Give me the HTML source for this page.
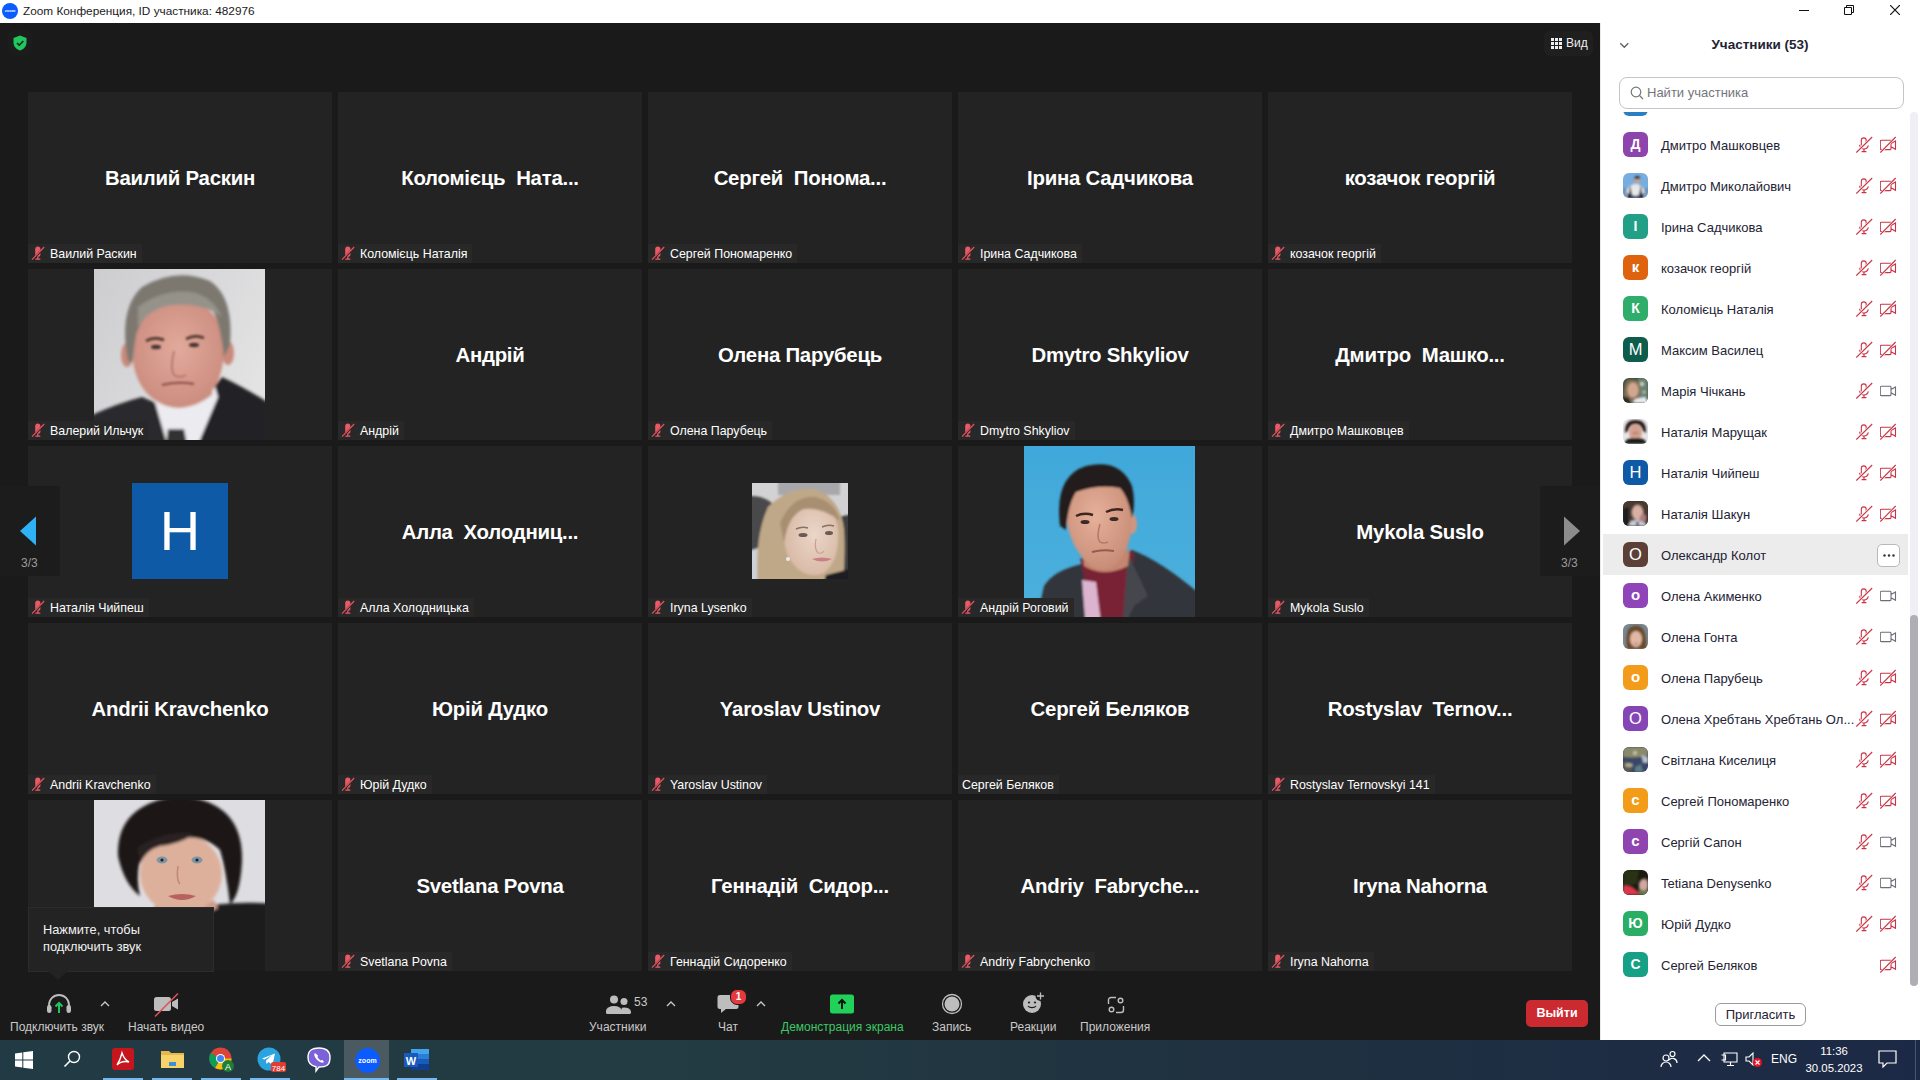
<!DOCTYPE html><html><head><meta charset="utf-8"><style>
*{margin:0;padding:0;box-sizing:border-box}
html,body{width:1920px;height:1080px;overflow:hidden;background:#1a1a1a;font-family:"Liberation Sans", sans-serif}
.abs{position:absolute}
#title{left:0;top:0;width:1920px;height:23px;background:#fff}
#main{left:0;top:23px;width:1600px;height:1017px;background:#1a1a1a}
.tile{position:absolute;width:304px;height:171px;background:#232323;overflow:hidden}
.big{position:absolute;left:0;width:304px;top:75px;text-align:center;color:#fff;font-weight:bold;font-size:20.4px;letter-spacing:-0.25px;line-height:22px;white-space:pre}
.tag{position:absolute;left:0;bottom:0;height:19px;background:#282828;color:#fff;font-size:12.4px;line-height:21px;padding-left:22px;padding-right:5px;white-space:pre}
.tag.nomic{padding-left:4px}
.tag svg{position:absolute;left:3px;top:2px}
#panel{left:1600px;top:23px;width:320px;height:1017px;background:#fff;border-left:1px solid #e8e8e8}
.row{position:absolute;left:1603px;width:305px;height:41px}
.av{position:absolute;left:20px;top:8px;width:25px;height:25px;border-radius:6px;color:#fff;font-size:14px;line-height:25px;text-align:center;overflow:hidden}
.pname{position:absolute;left:58px;top:1px;line-height:41px;font-size:13px;color:#232333;white-space:nowrap}
.ic{position:absolute;top:12px;width:17px;height:17px}
.tb{position:absolute;color:#c9c9c9;font-size:12px;white-space:nowrap}
#taskbar{left:0;top:1040px;width:1920px;height:40px;background:linear-gradient(90deg,#213a44 0%,#233b42 35%,#1f3140 65%,#1c2946 100%)}
</style></head><body><div id="title" class="abs">
<div class="abs" style="left:2px;top:3px;width:16px;height:16px;border-radius:50%;background:#0b5cff;color:#fff;font-size:4px;line-height:16px;text-align:center;font-weight:bold">zoom</div>
<div class="abs" style="left:23px;top:3px;font-size:11.8px;line-height:16px;color:#1a1a1a;white-space:nowrap">Zoom Конференция, ID участника: 482976</div>
<div class="abs" style="left:1799px;top:10px;width:10px;height:1px;background:#111"></div>
<svg class="abs" style="left:1844px;top:5px" width="10" height="10" viewBox="0 0 10 10"><path d="M0.5 2.5h7v7h-7z M2.5 2.5V0.5h7v7h-2" fill="none" stroke="#111" stroke-width="1"/></svg>
<svg class="abs" style="left:1890px;top:5px" width="10" height="10" viewBox="0 0 10 10"><path d="M0 0L10 10M10 0L0 10" stroke="#111" stroke-width="1.2"/></svg>
</div>
<div id="main" class="abs">
<div class="abs" style="left:8px;top:7px;width:24px;height:25px;border-radius:5px;background:#1c1c1c"></div>
<svg class="abs" style="left:13px;top:12px" width="14" height="16" viewBox="0 0 14 16"><path d="M7 0.5L13.5 3v4.5c0 4-2.8 6.8-6.5 8-3.7-1.2-6.5-4-6.5-8V3z" fill="#23c55e"/><path d="M4 8l2.2 2.2L10.3 6" fill="none" stroke="#0d2a16" stroke-width="1.6"/></svg>
<div class="abs" style="left:1544px;top:8px;width:49px;height:25px;border-radius:6px;background:#1f1f1f"></div>
<svg class="abs" style="left:1551px;top:15px" width="11" height="11" viewBox="0 0 11 11"><rect x="0" y="0" width="3" height="3" fill="#eee"/><rect x="0" y="4" width="3" height="3" fill="#eee"/><rect x="0" y="8" width="3" height="3" fill="#eee"/><rect x="4" y="0" width="3" height="3" fill="#eee"/><rect x="4" y="4" width="3" height="3" fill="#eee"/><rect x="4" y="8" width="3" height="3" fill="#eee"/><rect x="8" y="0" width="3" height="3" fill="#eee"/><rect x="8" y="4" width="3" height="3" fill="#eee"/><rect x="8" y="8" width="3" height="3" fill="#eee"/></svg>
<div class="abs" style="left:1566px;top:12px;color:#eee;font-size:12px;line-height:16px">Вид</div>
</div>
<div class="tile" style="left:28px;top:92px"><div class="big">Ваилий Раскин</div><div class="tag"><svg width="15" height="15" viewBox="0 0 15 15"><path d="M4.2 3.2a2.6 2.6 0 0 1 5.2 0v5a2.6 2.6 0 0 1-5.2 0z" fill="#ea5a66"/><path d="M6.8 11v1.8M4.3 13.2h5" stroke="#ea5a66" stroke-width="1.3"/><path d="M1.2 14L13.4 1.4" stroke="#282828" stroke-width="2.2"/><path d="M1 13.6L13.2 1" stroke="#e8525f" stroke-width="1.2"/></svg>Ваилий Раскин</div></div>
<div class="tile" style="left:338px;top:92px"><div class="big">Коломієць  Ната...</div><div class="tag"><svg width="15" height="15" viewBox="0 0 15 15"><path d="M4.2 3.2a2.6 2.6 0 0 1 5.2 0v5a2.6 2.6 0 0 1-5.2 0z" fill="#ea5a66"/><path d="M6.8 11v1.8M4.3 13.2h5" stroke="#ea5a66" stroke-width="1.3"/><path d="M1.2 14L13.4 1.4" stroke="#282828" stroke-width="2.2"/><path d="M1 13.6L13.2 1" stroke="#e8525f" stroke-width="1.2"/></svg>Коломієць Наталія</div></div>
<div class="tile" style="left:648px;top:92px"><div class="big">Сергей  Понома...</div><div class="tag"><svg width="15" height="15" viewBox="0 0 15 15"><path d="M4.2 3.2a2.6 2.6 0 0 1 5.2 0v5a2.6 2.6 0 0 1-5.2 0z" fill="#ea5a66"/><path d="M6.8 11v1.8M4.3 13.2h5" stroke="#ea5a66" stroke-width="1.3"/><path d="M1.2 14L13.4 1.4" stroke="#282828" stroke-width="2.2"/><path d="M1 13.6L13.2 1" stroke="#e8525f" stroke-width="1.2"/></svg>Сергей Пономаренко</div></div>
<div class="tile" style="left:958px;top:92px"><div class="big">Ірина Садчикова</div><div class="tag"><svg width="15" height="15" viewBox="0 0 15 15"><path d="M4.2 3.2a2.6 2.6 0 0 1 5.2 0v5a2.6 2.6 0 0 1-5.2 0z" fill="#ea5a66"/><path d="M6.8 11v1.8M4.3 13.2h5" stroke="#ea5a66" stroke-width="1.3"/><path d="M1.2 14L13.4 1.4" stroke="#282828" stroke-width="2.2"/><path d="M1 13.6L13.2 1" stroke="#e8525f" stroke-width="1.2"/></svg>Ірина Садчикова</div></div>
<div class="tile" style="left:1268px;top:92px"><div class="big">козачок георгій</div><div class="tag"><svg width="15" height="15" viewBox="0 0 15 15"><path d="M4.2 3.2a2.6 2.6 0 0 1 5.2 0v5a2.6 2.6 0 0 1-5.2 0z" fill="#ea5a66"/><path d="M6.8 11v1.8M4.3 13.2h5" stroke="#ea5a66" stroke-width="1.3"/><path d="M1.2 14L13.4 1.4" stroke="#282828" stroke-width="2.2"/><path d="M1 13.6L13.2 1" stroke="#e8525f" stroke-width="1.2"/></svg>козачок георгій</div></div>
<div class="tile" style="left:28px;top:269px"><svg class="abs" style="left:66px;top:0" width="171" height="171" viewBox="0 0 171 171"><defs><linearGradient id="g1" x1="0" y1="0" x2="1" y2="0.6"><stop offset="0" stop-color="#cdcdd0"/><stop offset="0.6" stop-color="#dadadc"/><stop offset="1" stop-color="#e4e3e3"/></linearGradient><radialGradient id="f1" cx="0.5" cy="0.45" r="0.6"><stop offset="0" stop-color="#e2aa9c"/><stop offset="1" stop-color="#c98a7c"/></radialGradient><filter id="b1" x="-20%" y="-20%" width="140%" height="140%"><feGaussianBlur stdDeviation="1.5"/></filter><filter id="b1s"><feGaussianBlur stdDeviation="0.8"/></filter></defs><rect width="171" height="171" fill="url(#g1)"/>
<g filter="url(#b1)">
<path d="M-15 152 Q20 135 48 128 L62 134 L86 185 L-15 185z" fill="#2b2b2d"/>
<path d="M185 140 Q150 118 128 108 L112 128 L92 185 L185 185z" fill="#242426"/>
<path d="M60 130 Q88 150 120 114 L124 128 L100 185 L76 185z" fill="#ecebef"/>
<path d="M74 160 L90 160 L95 185 L71 185z" fill="#333"/>
<path d="M62 112 Q88 142 120 108 L118 126 Q90 148 64 130z" fill="#c99484"/>
<ellipse cx="33" cy="86" rx="6" ry="12" fill="#c8897a"/><ellipse cx="134" cy="84" rx="6" ry="12" fill="#c8897a"/>
<path d="M38 78 Q38 34 84 32 Q128 32 130 78 Q130 116 108 132 Q84 146 62 132 Q38 116 38 78z" fill="url(#f1)"/>
<path d="M34 92 Q24 40 48 18 Q82 -2 116 12 Q140 28 136 76 L130 88 Q126 52 118 40 Q98 30 72 34 Q50 40 42 66 L38 94z" fill="#7b7870"/>
<path d="M44 38 Q72 18 102 24 Q120 30 128 48 Q110 34 80 36 Q56 38 44 58z" fill="#95928a"/>
</g>
<g filter="url(#b1s)">
<path d="M52 72 Q60 67 70 71" stroke="#5b4036" stroke-width="3" fill="none"/><path d="M92 70 Q101 65 110 69" stroke="#5b4036" stroke-width="3" fill="none"/>
<ellipse cx="62" cy="78" rx="5" ry="2.2" fill="#4a3630"/><ellipse cx="100" cy="76" rx="5" ry="2.2" fill="#4a3630"/>
<path d="M80 82 Q76 100 80 106 Q86 110 92 106" stroke="#b77c6e" stroke-width="2" fill="none"/>
<path d="M68 116 Q84 112 100 115" stroke="#9a5a52" stroke-width="2.5" fill="none"/>
</g>
</svg><div class="tag"><svg width="15" height="15" viewBox="0 0 15 15"><path d="M4.2 3.2a2.6 2.6 0 0 1 5.2 0v5a2.6 2.6 0 0 1-5.2 0z" fill="#ea5a66"/><path d="M6.8 11v1.8M4.3 13.2h5" stroke="#ea5a66" stroke-width="1.3"/><path d="M1.2 14L13.4 1.4" stroke="#282828" stroke-width="2.2"/><path d="M1 13.6L13.2 1" stroke="#e8525f" stroke-width="1.2"/></svg>Валерий Ильчук</div></div>
<div class="tile" style="left:338px;top:269px"><div class="big">Андрій</div><div class="tag"><svg width="15" height="15" viewBox="0 0 15 15"><path d="M4.2 3.2a2.6 2.6 0 0 1 5.2 0v5a2.6 2.6 0 0 1-5.2 0z" fill="#ea5a66"/><path d="M6.8 11v1.8M4.3 13.2h5" stroke="#ea5a66" stroke-width="1.3"/><path d="M1.2 14L13.4 1.4" stroke="#282828" stroke-width="2.2"/><path d="M1 13.6L13.2 1" stroke="#e8525f" stroke-width="1.2"/></svg>Андрій</div></div>
<div class="tile" style="left:648px;top:269px"><div class="big">Олена Парубець</div><div class="tag"><svg width="15" height="15" viewBox="0 0 15 15"><path d="M4.2 3.2a2.6 2.6 0 0 1 5.2 0v5a2.6 2.6 0 0 1-5.2 0z" fill="#ea5a66"/><path d="M6.8 11v1.8M4.3 13.2h5" stroke="#ea5a66" stroke-width="1.3"/><path d="M1.2 14L13.4 1.4" stroke="#282828" stroke-width="2.2"/><path d="M1 13.6L13.2 1" stroke="#e8525f" stroke-width="1.2"/></svg>Олена Парубець</div></div>
<div class="tile" style="left:958px;top:269px"><div class="big">Dmytro Shkyliov</div><div class="tag"><svg width="15" height="15" viewBox="0 0 15 15"><path d="M4.2 3.2a2.6 2.6 0 0 1 5.2 0v5a2.6 2.6 0 0 1-5.2 0z" fill="#ea5a66"/><path d="M6.8 11v1.8M4.3 13.2h5" stroke="#ea5a66" stroke-width="1.3"/><path d="M1.2 14L13.4 1.4" stroke="#282828" stroke-width="2.2"/><path d="M1 13.6L13.2 1" stroke="#e8525f" stroke-width="1.2"/></svg>Dmytro Shkyliov</div></div>
<div class="tile" style="left:1268px;top:269px"><div class="big">Дмитро  Машко...</div><div class="tag"><svg width="15" height="15" viewBox="0 0 15 15"><path d="M4.2 3.2a2.6 2.6 0 0 1 5.2 0v5a2.6 2.6 0 0 1-5.2 0z" fill="#ea5a66"/><path d="M6.8 11v1.8M4.3 13.2h5" stroke="#ea5a66" stroke-width="1.3"/><path d="M1.2 14L13.4 1.4" stroke="#282828" stroke-width="2.2"/><path d="M1 13.6L13.2 1" stroke="#e8525f" stroke-width="1.2"/></svg>Дмитро Машковцев</div></div>
<div class="tile" style="left:28px;top:446px"><div class="abs" style="left:104px;top:37px;width:96px;height:96px;background:#0e5aa7;color:#fff;font-size:56px;line-height:96px;text-align:center">H</div><div class="tag"><svg width="15" height="15" viewBox="0 0 15 15"><path d="M4.2 3.2a2.6 2.6 0 0 1 5.2 0v5a2.6 2.6 0 0 1-5.2 0z" fill="#ea5a66"/><path d="M6.8 11v1.8M4.3 13.2h5" stroke="#ea5a66" stroke-width="1.3"/><path d="M1.2 14L13.4 1.4" stroke="#282828" stroke-width="2.2"/><path d="M1 13.6L13.2 1" stroke="#e8525f" stroke-width="1.2"/></svg>Наталія Чийпеш</div></div>
<div class="tile" style="left:338px;top:446px"><div class="big">Алла  Холодниц...</div><div class="tag"><svg width="15" height="15" viewBox="0 0 15 15"><path d="M4.2 3.2a2.6 2.6 0 0 1 5.2 0v5a2.6 2.6 0 0 1-5.2 0z" fill="#ea5a66"/><path d="M6.8 11v1.8M4.3 13.2h5" stroke="#ea5a66" stroke-width="1.3"/><path d="M1.2 14L13.4 1.4" stroke="#282828" stroke-width="2.2"/><path d="M1 13.6L13.2 1" stroke="#e8525f" stroke-width="1.2"/></svg>Алла Холодницька</div></div>
<div class="tile" style="left:648px;top:446px"><svg class="abs" style="left:104px;top:37px" width="96" height="96" viewBox="0 0 96 96"><defs><filter id="b2"><feGaussianBlur stdDeviation="1.3"/></filter><filter id="b2s"><feGaussianBlur stdDeviation="0.6"/></filter><radialGradient id="f2" cx="0.55" cy="0.45" r="0.6"><stop offset="0" stop-color="#ead6c8"/><stop offset="1" stop-color="#d8b8a4"/></radialGradient></defs><rect width="96" height="96" fill="#d2d2d4"/>
<g filter="url(#b2)">
<rect x="26" y="-10" width="62" height="22" fill="#a8a8aa"/>
<path d="M-10 14 Q10 10 22 22 L22 64 L-10 70z" fill="#4a4a4c"/>
<path d="M86 34 L106 30 L106 106 L84 106z" fill="#3e3e40"/>
<path d="M-10 70 L16 62 L14 106 L-10 106z" fill="#cdd2d6"/>
<path d="M6 106 Q2 54 16 24 Q36 4 62 6 Q88 14 92 46 Q94 76 90 106z" fill="#bfa888"/>
<path d="M32 52 Q30 22 56 18 Q82 18 86 46 Q88 78 72 90 Q58 96 46 86 Q32 74 32 52z" fill="url(#f2)"/>
<path d="M28 40 Q40 12 64 14 Q84 20 88 38 Q70 24 52 26 Q36 32 32 60z" fill="#a88f72"/>
<path d="M74 92 L106 84 L106 106 L70 106z" fill="#1e1e20"/>
</g>
<g filter="url(#b2s)">
<path d="M44 46 Q50 43 56 45" stroke="#8a7060" stroke-width="1.4" fill="none"/><path d="M70 44 Q76 41 82 43" stroke="#8a7060" stroke-width="1.4" fill="none"/>
<ellipse cx="51" cy="52" rx="4.5" ry="2" fill="#6a5a52"/><ellipse cx="77" cy="50" rx="4" ry="2" fill="#6a5a52"/>
<path d="M64 56 Q62 66 66 70 Q70 71 72 68" stroke="#c8a090" stroke-width="1.2" fill="none"/>
<path d="M60 76 Q70 73 80 76 Q70 81 60 76z" fill="#c97f86"/>
<circle cx="36" cy="76" r="2" fill="#eaeaea"/>
</g>
</svg><div class="tag"><svg width="15" height="15" viewBox="0 0 15 15"><path d="M4.2 3.2a2.6 2.6 0 0 1 5.2 0v5a2.6 2.6 0 0 1-5.2 0z" fill="#ea5a66"/><path d="M6.8 11v1.8M4.3 13.2h5" stroke="#ea5a66" stroke-width="1.3"/><path d="M1.2 14L13.4 1.4" stroke="#282828" stroke-width="2.2"/><path d="M1 13.6L13.2 1" stroke="#e8525f" stroke-width="1.2"/></svg>Iryna Lysenko</div></div>
<div class="tile" style="left:958px;top:446px"><svg class="abs" style="left:66px;top:0" width="171" height="171" viewBox="0 0 171 171"><defs><linearGradient id="g3" x1="0" y1="0" x2="0" y2="1"><stop offset="0" stop-color="#40a8da"/><stop offset="1" stop-color="#4cb0dc"/></linearGradient><radialGradient id="f3" cx="0.45" cy="0.4" r="0.6"><stop offset="0" stop-color="#e6b09a"/><stop offset="1" stop-color="#c98e78"/></radialGradient><filter id="b3"><feGaussianBlur stdDeviation="1.3"/></filter><filter id="b3s"><feGaussianBlur stdDeviation="0.7"/></filter></defs><rect width="171" height="171" fill="url(#g3)"/>
<g filter="url(#b3)">
<path d="M10 185 L20 140 Q30 124 58 118 L108 104 Q140 116 185 156 L185 185z" fill="#33353b"/>
<path d="M56 112 L72 185 L104 185 L110 106 Q84 120 56 112z" fill="#7a2034"/>
<path d="M58 134 L72 136 L78 185 L62 185z" fill="#dcb4cf"/>
<path d="M104 108 L124 150 L110 160 L98 185z" fill="#44474e"/>
<path d="M58 104 Q78 128 106 102 L104 120 Q80 132 60 120z" fill="#c58670"/>
<ellipse cx="108" cy="78" rx="5" ry="10" fill="#d29680"/>
<path d="M42 70 Q40 36 72 34 Q106 34 108 70 Q108 104 92 118 Q80 128 68 120 Q46 104 42 70z" fill="url(#f3)"/>
<path d="M36 80 Q30 30 62 20 Q96 12 108 40 Q112 56 108 72 Q104 50 96 42 Q74 38 52 46 Q44 58 42 84z" fill="#221e1c"/>
</g>
<g filter="url(#b3s)">
<path d="M52 70 Q60 66 69 69" stroke="#3a2820" stroke-width="2.5" fill="none"/><path d="M82 66 Q90 62 99 64" stroke="#3a2820" stroke-width="2.5" fill="none"/>
<ellipse cx="61" cy="76" rx="4.5" ry="2" fill="#3a2c28"/><ellipse cx="90" cy="73" rx="4.5" ry="2" fill="#3a2c28"/>
<path d="M76 78 Q72 92 76 96 Q80 98 84 96" stroke="#b87a66" stroke-width="1.6" fill="none"/>
<path d="M68 106 Q78 103 90 105" stroke="#9a5a50" stroke-width="2" fill="none"/>
</g>
</svg><div class="tag"><svg width="15" height="15" viewBox="0 0 15 15"><path d="M4.2 3.2a2.6 2.6 0 0 1 5.2 0v5a2.6 2.6 0 0 1-5.2 0z" fill="#ea5a66"/><path d="M6.8 11v1.8M4.3 13.2h5" stroke="#ea5a66" stroke-width="1.3"/><path d="M1.2 14L13.4 1.4" stroke="#282828" stroke-width="2.2"/><path d="M1 13.6L13.2 1" stroke="#e8525f" stroke-width="1.2"/></svg>Андрій Роговий</div></div>
<div class="tile" style="left:1268px;top:446px"><div class="big">Mykola Suslo</div><div class="tag"><svg width="15" height="15" viewBox="0 0 15 15"><path d="M4.2 3.2a2.6 2.6 0 0 1 5.2 0v5a2.6 2.6 0 0 1-5.2 0z" fill="#ea5a66"/><path d="M6.8 11v1.8M4.3 13.2h5" stroke="#ea5a66" stroke-width="1.3"/><path d="M1.2 14L13.4 1.4" stroke="#282828" stroke-width="2.2"/><path d="M1 13.6L13.2 1" stroke="#e8525f" stroke-width="1.2"/></svg>Mykola Suslo</div></div>
<div class="tile" style="left:28px;top:623px"><div class="big">Andrii Kravchenko</div><div class="tag"><svg width="15" height="15" viewBox="0 0 15 15"><path d="M4.2 3.2a2.6 2.6 0 0 1 5.2 0v5a2.6 2.6 0 0 1-5.2 0z" fill="#ea5a66"/><path d="M6.8 11v1.8M4.3 13.2h5" stroke="#ea5a66" stroke-width="1.3"/><path d="M1.2 14L13.4 1.4" stroke="#282828" stroke-width="2.2"/><path d="M1 13.6L13.2 1" stroke="#e8525f" stroke-width="1.2"/></svg>Andrii Kravchenko</div></div>
<div class="tile" style="left:338px;top:623px"><div class="big">Юрій Дудко</div><div class="tag"><svg width="15" height="15" viewBox="0 0 15 15"><path d="M4.2 3.2a2.6 2.6 0 0 1 5.2 0v5a2.6 2.6 0 0 1-5.2 0z" fill="#ea5a66"/><path d="M6.8 11v1.8M4.3 13.2h5" stroke="#ea5a66" stroke-width="1.3"/><path d="M1.2 14L13.4 1.4" stroke="#282828" stroke-width="2.2"/><path d="M1 13.6L13.2 1" stroke="#e8525f" stroke-width="1.2"/></svg>Юрій Дудко</div></div>
<div class="tile" style="left:648px;top:623px"><div class="big">Yaroslav Ustinov</div><div class="tag"><svg width="15" height="15" viewBox="0 0 15 15"><path d="M4.2 3.2a2.6 2.6 0 0 1 5.2 0v5a2.6 2.6 0 0 1-5.2 0z" fill="#ea5a66"/><path d="M6.8 11v1.8M4.3 13.2h5" stroke="#ea5a66" stroke-width="1.3"/><path d="M1.2 14L13.4 1.4" stroke="#282828" stroke-width="2.2"/><path d="M1 13.6L13.2 1" stroke="#e8525f" stroke-width="1.2"/></svg>Yaroslav Ustinov</div></div>
<div class="tile" style="left:958px;top:623px"><div class="big">Сергей Беляков</div><div class="tag nomic">Сергей Беляков</div></div>
<div class="tile" style="left:1268px;top:623px"><div class="big">Rostyslav  Ternov...</div><div class="tag"><svg width="15" height="15" viewBox="0 0 15 15"><path d="M4.2 3.2a2.6 2.6 0 0 1 5.2 0v5a2.6 2.6 0 0 1-5.2 0z" fill="#ea5a66"/><path d="M6.8 11v1.8M4.3 13.2h5" stroke="#ea5a66" stroke-width="1.3"/><path d="M1.2 14L13.4 1.4" stroke="#282828" stroke-width="2.2"/><path d="M1 13.6L13.2 1" stroke="#e8525f" stroke-width="1.2"/></svg>Rostyslav Ternovskyi 141</div></div>
<div class="tile" style="left:28px;top:800px"><svg class="abs" style="left:66px;top:0" width="171" height="171" viewBox="0 0 171 171"><defs><filter id="b4"><feGaussianBlur stdDeviation="1.4"/></filter><filter id="b4s"><feGaussianBlur stdDeviation="0.7"/></filter></defs><rect width="171" height="171" fill="#dedee2"/>
<g filter="url(#b4)">
<path d="M44 185 Q52 124 96 110 Q130 100 185 104 L185 185z" fill="#1c1b1f"/>
<path d="M58 112 Q88 128 124 108 L120 100 Q90 118 62 104z" fill="#cf9c8a"/>
<ellipse cx="87" cy="74" rx="41" ry="40" fill="#ddb09c"/>
<path d="M24 56 Q22 4 84 -4 Q150 0 148 62 Q146 96 136 104 Q132 70 126 50 Q110 34 82 38 Q56 40 46 60 Q42 80 46 96 Q30 84 24 56z" fill="#1d1818"/>
<path d="M44 48 Q70 30 100 34 Q86 44 66 46 Q52 50 46 64z" fill="#2a2222"/>
<rect x="96" y="128" width="8" height="60" rx="4" fill="#6a5a78"/>
</g>
<g filter="url(#b4s)">
<ellipse cx="68" cy="60" rx="5.5" ry="3.5" fill="#7f95a4"/><ellipse cx="103" cy="60" rx="5.5" ry="3.5" fill="#7f95a4"/>
<circle cx="68" cy="60" r="1.6" fill="#222"/><circle cx="103" cy="60" r="1.6" fill="#222"/>
<path d="M84 66 Q82 80 86 84" stroke="#c08a78" stroke-width="1.6" fill="none"/>
<path d="M74 96 Q88 92 102 96 Q88 104 74 96z" fill="#b8625e"/>
</g>
</svg></div>
<div class="tile" style="left:338px;top:800px"><div class="big">Svetlana Povna</div><div class="tag"><svg width="15" height="15" viewBox="0 0 15 15"><path d="M4.2 3.2a2.6 2.6 0 0 1 5.2 0v5a2.6 2.6 0 0 1-5.2 0z" fill="#ea5a66"/><path d="M6.8 11v1.8M4.3 13.2h5" stroke="#ea5a66" stroke-width="1.3"/><path d="M1.2 14L13.4 1.4" stroke="#282828" stroke-width="2.2"/><path d="M1 13.6L13.2 1" stroke="#e8525f" stroke-width="1.2"/></svg>Svetlana Povna</div></div>
<div class="tile" style="left:648px;top:800px"><div class="big">Геннадій  Сидор...</div><div class="tag"><svg width="15" height="15" viewBox="0 0 15 15"><path d="M4.2 3.2a2.6 2.6 0 0 1 5.2 0v5a2.6 2.6 0 0 1-5.2 0z" fill="#ea5a66"/><path d="M6.8 11v1.8M4.3 13.2h5" stroke="#ea5a66" stroke-width="1.3"/><path d="M1.2 14L13.4 1.4" stroke="#282828" stroke-width="2.2"/><path d="M1 13.6L13.2 1" stroke="#e8525f" stroke-width="1.2"/></svg>Геннадій Сидоренко</div></div>
<div class="tile" style="left:958px;top:800px"><div class="big">Andriy  Fabryche...</div><div class="tag"><svg width="15" height="15" viewBox="0 0 15 15"><path d="M4.2 3.2a2.6 2.6 0 0 1 5.2 0v5a2.6 2.6 0 0 1-5.2 0z" fill="#ea5a66"/><path d="M6.8 11v1.8M4.3 13.2h5" stroke="#ea5a66" stroke-width="1.3"/><path d="M1.2 14L13.4 1.4" stroke="#282828" stroke-width="2.2"/><path d="M1 13.6L13.2 1" stroke="#e8525f" stroke-width="1.2"/></svg>Andriy Fabrychenko</div></div>
<div class="tile" style="left:1268px;top:800px"><div class="big">Iryna Nahorna</div><div class="tag"><svg width="15" height="15" viewBox="0 0 15 15"><path d="M4.2 3.2a2.6 2.6 0 0 1 5.2 0v5a2.6 2.6 0 0 1-5.2 0z" fill="#ea5a66"/><path d="M6.8 11v1.8M4.3 13.2h5" stroke="#ea5a66" stroke-width="1.3"/><path d="M1.2 14L13.4 1.4" stroke="#282828" stroke-width="2.2"/><path d="M1 13.6L13.2 1" stroke="#e8525f" stroke-width="1.2"/></svg>Iryna Nahorna</div></div>
<div class="abs" style="left:0;top:486px;width:60px;height:90px;background:#1c1c1c"></div>
<svg class="abs" style="left:19px;top:516px" width="18" height="30" viewBox="0 0 18 30"><path d="M17 0.5V29.5L1 15z" fill="#2fb2f5"/></svg>
<div class="abs" style="left:21px;top:556px;color:#9a9a9a;font-size:12px;line-height:14px">3/3</div>
<div class="abs" style="left:1540px;top:486px;width:60px;height:90px;background:#1c1c1c"></div>
<svg class="abs" style="left:1563px;top:516px" width="18" height="30" viewBox="0 0 18 30"><path d="M1 0.5V29.5L17 15z" fill="#8c8c8c"/></svg>
<div class="abs" style="left:1561px;top:556px;color:#9a9a9a;font-size:12px;line-height:14px">3/3</div>
<div class="abs" style="left:28px;top:907px;width:186px;height:65px;background:#232323;border:1px solid #2c2c2c"></div>
<svg class="abs" style="left:48px;top:971px" width="20" height="10" viewBox="0 0 20 10"><path d="M0 0h20L10 9z" fill="#232323"/></svg>
<div class="abs" style="left:43px;top:921px;color:#f2f2f2;font-size:12.8px;line-height:17px">Нажмите, чтобы<br>подключить звук</div>
<svg class="abs" style="left:46px;top:994px" width="26" height="20" viewBox="0 0 26 20"><path d="M3 14V11a10 10 0 0 1 20 0v3" fill="none" stroke="#bdbdbd" stroke-width="1.8"/><rect x="1" y="11" width="4.5" height="8" rx="2.2" fill="#bdbdbd"/><rect x="20.5" y="11" width="4.5" height="8" rx="2.2" fill="#bdbdbd"/><path d="M13 19V9M9.5 12.5L13 9l3.5 3.5" fill="none" stroke="#22c55e" stroke-width="2"/></svg>
<svg class="abs" style="left:100px;top:1001px" width="10" height="6" viewBox="0 0 10 6"><path d="M1 5l4-4 4 4" fill="none" stroke="#c8c8c8" stroke-width="1.3"/></svg>
<div class="tb" style="left:10px;top:1020px">Подключить звук</div>
<svg class="abs" style="left:153px;top:992px" width="27" height="26" viewBox="0 0 27 26"><rect x="1" y="5" width="17" height="14" rx="2.5" fill="#bdbdbd"/><path d="M19 10l6-3.5v11L19 14z" fill="#bdbdbd"/><path d="M2 24.5L25 1.5" stroke="#e0505c" stroke-width="1.6"/></svg>
<div class="tb" style="left:128px;top:1020px">Начать видео</div>
<svg class="abs" style="left:606px;top:995px" width="25" height="19" viewBox="0 0 25 19"><circle cx="8" cy="4.5" r="4" fill="#bdbdbd"/><circle cx="18" cy="6.5" r="3.5" fill="#bdbdbd"/><path d="M0 16a8 5 0 0 1 16 0v1.5a1.5 1.5 0 0 1-1.5 1.5h-13A1.5 1.5 0 0 1 0 17.5z" fill="#bdbdbd"/><path d="M14 19h9.5a1.5 1.5 0 0 0 1.5-1.5v-1a6.5 4.5 0 0 0-9-3.7" fill="#bdbdbd"/></svg>
<div class="tb" style="left:634px;top:995px">53</div>
<svg class="abs" style="left:666px;top:1001px" width="10" height="6" viewBox="0 0 10 6"><path d="M1 5l4-4 4 4" fill="none" stroke="#c8c8c8" stroke-width="1.3"/></svg>
<div class="tb" style="left:589px;top:1020px">Участники</div>
<svg class="abs" style="left:717px;top:994px" width="22" height="20" viewBox="0 0 22 20"><path d="M3 1h16a2.5 2.5 0 0 1 2.5 2.5v9a2.5 2.5 0 0 1-2.5 2.5H9l-5 4v-4H3A2.5 2.5 0 0 1 .5 12.5v-9A2.5 2.5 0 0 1 3 1z" fill="#bdbdbd"/></svg>
<div class="abs" style="left:730px;top:989px;width:17px;height:16px;border-radius:7px;background:#e5393f;border:1px solid #1a1a1a;color:#fff;font-size:10px;font-weight:bold;line-height:14px;text-align:center">1</div>
<svg class="abs" style="left:756px;top:1001px" width="10" height="6" viewBox="0 0 10 6"><path d="M1 5l4-4 4 4" fill="none" stroke="#c8c8c8" stroke-width="1.3"/></svg>
<div class="tb" style="left:718px;top:1020px">Чат</div>
<svg class="abs" style="left:830px;top:994px" width="25" height="20" viewBox="0 0 25 20"><rect x="0" y="0.5" width="24" height="19" rx="2.5" fill="#22d15a"/><path d="M12 15V6M8.5 9.5L12 6l3.5 3.5" fill="none" stroke="#111" stroke-width="2"/></svg>
<div class="tb" style="left:781px;top:1020px;color:#3cc866">Демонстрация экрана</div>
<svg class="abs" style="left:941px;top:993px" width="22" height="22" viewBox="0 0 22 22"><circle cx="11" cy="11" r="9.5" fill="none" stroke="#bdbdbd" stroke-width="1.3"/><circle cx="11" cy="11" r="7.5" fill="#bdbdbd"/></svg>
<div class="tb" style="left:932px;top:1020px">Запись</div>
<svg class="abs" style="left:1022px;top:991px" width="24" height="23" viewBox="0 0 24 23"><circle cx="10" cy="13" r="9" fill="#bdbdbd"/><circle cx="7" cy="11.5" r="1.1" fill="#1a1a1a"/><circle cx="13" cy="11.5" r="1.1" fill="#1a1a1a"/><path d="M6 15a4.5 3 0 0 0 8 0" fill="none" stroke="#1a1a1a" stroke-width="1.2"/><circle cx="18.5" cy="5" r="5" fill="#1a1a1a"/><path d="M18.5 1.5v7M15 5h7" stroke="#bdbdbd" stroke-width="1.3"/></svg>
<div class="tb" style="left:1010px;top:1020px">Реакции</div>
<svg class="abs" style="left:1107px;top:996px" width="18" height="18" viewBox="0 0 18 18"><path d="M1.5 8V4a2.5 2.5 0 0 1 2.5-2.5h5M16.5 10v4a2.5 2.5 0 0 1-2.5 2.5H9" fill="none" stroke="#bdbdbd" stroke-width="1.4"/><circle cx="13.5" cy="4.5" r="2.3" fill="none" stroke="#bdbdbd" stroke-width="1.4"/><circle cx="4.5" cy="13.5" r="2.3" fill="none" stroke="#bdbdbd" stroke-width="1.4"/></svg>
<div class="tb" style="left:1080px;top:1020px">Приложения</div>
<div class="abs" style="left:1526px;top:1000px;width:62px;height:27px;border-radius:5px;background:#cb2a30;color:#fff;font-size:12.5px;font-weight:bold;line-height:27px;text-align:center">Выйти</div>
<div id="panel" class="abs"></div><svg width="0" height="0" style="position:absolute"><defs><filter id="avb" x="-10%" y="-10%" width="120%" height="120%"><feGaussianBlur stdDeviation="0.9"/></filter></defs></svg>
<svg class="abs" style="left:1619px;top:41px" width="11" height="8" viewBox="0 0 11 8"><path d="M1.3 2.3l4 4 4-4" fill="none" stroke="#62626c" stroke-width="1.4"/></svg>
<div class="abs" style="left:1600px;top:36px;width:320px;text-align:center;font-size:13.5px;font-weight:bold;color:#232333;line-height:18px">Участники (53)</div>
<div class="row" style="top:124px;"><div class="av" style="background:#8d44ad;font-size:14px;line-height:25px;font-weight:bold">Д</div><div class="pname">Дмитро Машковцев</div><div class="ic" style="left:253px"><svg width="17" height="17" viewBox="0 0 17 17"><path d="M5.3 9.5V4.3a2.45 2.45 0 0 1 4.9 0v3" fill="none" stroke="#c83446" stroke-width="1.1"/><path d="M3.6 8.8a4.4 4.4 0 0 0 4.4 4.2 4.4 4.4 0 0 0 4.3-3.6" fill="none" stroke="#c83446" stroke-width="1.1"/><path d="M8 13v2.2M5.6 15.6h4.8" stroke="#c83446" stroke-width="1.2"/><path d="M0.3 16.6L16.2 1" stroke="#fff" stroke-width="2.4"/><path d="M0.3 16.6L16.2 1" stroke="#c83446" stroke-width="1.1"/></svg></div><div class="ic" style="left:277px"><svg width="17" height="17" viewBox="0 0 17 17"><path d="M11 4.3H1.3a1 1 0 0 0-1 1v7.3a1 1 0 0 0 1 1H10a1 1 0 0 0 1-1V5.3zM11 7.5L15.5 5v8.3L11 10.8" fill="none" stroke="#c83446" stroke-width="1.1"/><path d="M0.3 16.6L15.7 1" stroke="#fff" stroke-width="2.4"/><path d="M0.3 16.6L15.7 1" stroke="#c83446" stroke-width="1.1"/></svg></div></div>
<div class="row" style="top:165px;"><svg class="av" width="25" height="25" viewBox="0 0 25 25" style="border-radius:6px"><rect width="25" height="25" fill="#78ade0"/><g filter="url(#avb)"><rect x="0" y="15" width="25" height="10" fill="#6a8fb8"/><path d="M3 25 L4 16 Q8 11 12.5 11 Q17 11 21 16 L22 25z" fill="#e8e8ea"/><path d="M7 12 L9 22 L6 22z M18 12 L16 22 L19 22z" fill="#222"/><path d="M4 20 Q12.5 26 21 20 L21 25 L4 25z" fill="#1c2640"/><ellipse cx="14" cy="7.5" rx="2.6" ry="3.2" fill="#caa08a"/><path d="M11 6 Q12 3 14 3 Q17 3 17 6z" fill="#222"/></g></svg><div class="pname">Дмитро Миколайович</div><div class="ic" style="left:253px"><svg width="17" height="17" viewBox="0 0 17 17"><path d="M5.3 9.5V4.3a2.45 2.45 0 0 1 4.9 0v3" fill="none" stroke="#c83446" stroke-width="1.1"/><path d="M3.6 8.8a4.4 4.4 0 0 0 4.4 4.2 4.4 4.4 0 0 0 4.3-3.6" fill="none" stroke="#c83446" stroke-width="1.1"/><path d="M8 13v2.2M5.6 15.6h4.8" stroke="#c83446" stroke-width="1.2"/><path d="M0.3 16.6L16.2 1" stroke="#fff" stroke-width="2.4"/><path d="M0.3 16.6L16.2 1" stroke="#c83446" stroke-width="1.1"/></svg></div><div class="ic" style="left:277px"><svg width="17" height="17" viewBox="0 0 17 17"><path d="M11 4.3H1.3a1 1 0 0 0-1 1v7.3a1 1 0 0 0 1 1H10a1 1 0 0 0 1-1V5.3zM11 7.5L15.5 5v8.3L11 10.8" fill="none" stroke="#c83446" stroke-width="1.1"/><path d="M0.3 16.6L15.7 1" stroke="#fff" stroke-width="2.4"/><path d="M0.3 16.6L15.7 1" stroke="#c83446" stroke-width="1.1"/></svg></div></div>
<div class="row" style="top:206px;"><div class="av" style="background:#22a087;font-size:14px;line-height:25px;font-weight:bold">І</div><div class="pname">Ірина Садчикова</div><div class="ic" style="left:253px"><svg width="17" height="17" viewBox="0 0 17 17"><path d="M5.3 9.5V4.3a2.45 2.45 0 0 1 4.9 0v3" fill="none" stroke="#c83446" stroke-width="1.1"/><path d="M3.6 8.8a4.4 4.4 0 0 0 4.4 4.2 4.4 4.4 0 0 0 4.3-3.6" fill="none" stroke="#c83446" stroke-width="1.1"/><path d="M8 13v2.2M5.6 15.6h4.8" stroke="#c83446" stroke-width="1.2"/><path d="M0.3 16.6L16.2 1" stroke="#fff" stroke-width="2.4"/><path d="M0.3 16.6L16.2 1" stroke="#c83446" stroke-width="1.1"/></svg></div><div class="ic" style="left:277px"><svg width="17" height="17" viewBox="0 0 17 17"><path d="M11 4.3H1.3a1 1 0 0 0-1 1v7.3a1 1 0 0 0 1 1H10a1 1 0 0 0 1-1V5.3zM11 7.5L15.5 5v8.3L11 10.8" fill="none" stroke="#c83446" stroke-width="1.1"/><path d="M0.3 16.6L15.7 1" stroke="#fff" stroke-width="2.4"/><path d="M0.3 16.6L15.7 1" stroke="#c83446" stroke-width="1.1"/></svg></div></div>
<div class="row" style="top:247px;"><div class="av" style="background:#df620f;font-size:15px;line-height:24px;font-weight:bold">к</div><div class="pname">козачок георгій</div><div class="ic" style="left:253px"><svg width="17" height="17" viewBox="0 0 17 17"><path d="M5.3 9.5V4.3a2.45 2.45 0 0 1 4.9 0v3" fill="none" stroke="#c83446" stroke-width="1.1"/><path d="M3.6 8.8a4.4 4.4 0 0 0 4.4 4.2 4.4 4.4 0 0 0 4.3-3.6" fill="none" stroke="#c83446" stroke-width="1.1"/><path d="M8 13v2.2M5.6 15.6h4.8" stroke="#c83446" stroke-width="1.2"/><path d="M0.3 16.6L16.2 1" stroke="#fff" stroke-width="2.4"/><path d="M0.3 16.6L16.2 1" stroke="#c83446" stroke-width="1.1"/></svg></div><div class="ic" style="left:277px"><svg width="17" height="17" viewBox="0 0 17 17"><path d="M11 4.3H1.3a1 1 0 0 0-1 1v7.3a1 1 0 0 0 1 1H10a1 1 0 0 0 1-1V5.3zM11 7.5L15.5 5v8.3L11 10.8" fill="none" stroke="#c83446" stroke-width="1.1"/><path d="M0.3 16.6L15.7 1" stroke="#fff" stroke-width="2.4"/><path d="M0.3 16.6L15.7 1" stroke="#c83446" stroke-width="1.1"/></svg></div></div>
<div class="row" style="top:288px;"><div class="av" style="background:#2ead6b;font-size:14px;line-height:25px;font-weight:bold">К</div><div class="pname">Коломієць Наталія</div><div class="ic" style="left:253px"><svg width="17" height="17" viewBox="0 0 17 17"><path d="M5.3 9.5V4.3a2.45 2.45 0 0 1 4.9 0v3" fill="none" stroke="#c83446" stroke-width="1.1"/><path d="M3.6 8.8a4.4 4.4 0 0 0 4.4 4.2 4.4 4.4 0 0 0 4.3-3.6" fill="none" stroke="#c83446" stroke-width="1.1"/><path d="M8 13v2.2M5.6 15.6h4.8" stroke="#c83446" stroke-width="1.2"/><path d="M0.3 16.6L16.2 1" stroke="#fff" stroke-width="2.4"/><path d="M0.3 16.6L16.2 1" stroke="#c83446" stroke-width="1.1"/></svg></div><div class="ic" style="left:277px"><svg width="17" height="17" viewBox="0 0 17 17"><path d="M11 4.3H1.3a1 1 0 0 0-1 1v7.3a1 1 0 0 0 1 1H10a1 1 0 0 0 1-1V5.3zM11 7.5L15.5 5v8.3L11 10.8" fill="none" stroke="#c83446" stroke-width="1.1"/><path d="M0.3 16.6L15.7 1" stroke="#fff" stroke-width="2.4"/><path d="M0.3 16.6L15.7 1" stroke="#c83446" stroke-width="1.1"/></svg></div></div>
<div class="row" style="top:329px;"><div class="av" style="background:#0e5c4b;font-size:16.5px;line-height:25px;font-weight:normal">М</div><div class="pname">Максим Василец</div><div class="ic" style="left:253px"><svg width="17" height="17" viewBox="0 0 17 17"><path d="M5.3 9.5V4.3a2.45 2.45 0 0 1 4.9 0v3" fill="none" stroke="#c83446" stroke-width="1.1"/><path d="M3.6 8.8a4.4 4.4 0 0 0 4.4 4.2 4.4 4.4 0 0 0 4.3-3.6" fill="none" stroke="#c83446" stroke-width="1.1"/><path d="M8 13v2.2M5.6 15.6h4.8" stroke="#c83446" stroke-width="1.2"/><path d="M0.3 16.6L16.2 1" stroke="#fff" stroke-width="2.4"/><path d="M0.3 16.6L16.2 1" stroke="#c83446" stroke-width="1.1"/></svg></div><div class="ic" style="left:277px"><svg width="17" height="17" viewBox="0 0 17 17"><path d="M11 4.3H1.3a1 1 0 0 0-1 1v7.3a1 1 0 0 0 1 1H10a1 1 0 0 0 1-1V5.3zM11 7.5L15.5 5v8.3L11 10.8" fill="none" stroke="#c83446" stroke-width="1.1"/><path d="M0.3 16.6L15.7 1" stroke="#fff" stroke-width="2.4"/><path d="M0.3 16.6L15.7 1" stroke="#c83446" stroke-width="1.1"/></svg></div></div>
<div class="row" style="top:370px;"><svg class="av" width="25" height="25" viewBox="0 0 25 25" style="border-radius:6px"><rect width="25" height="25" fill="#3e5440"/><g filter="url(#avb)"><rect x="15" y="0" width="10" height="25" fill="#6a8070"/><circle cx="19" cy="6" r="2" fill="#cfd8d0"/><circle cx="21" cy="14" r="1.6" fill="#b8c4b8"/><path d="M1 25 Q0 8 4 3 Q10 0 16 4 L17 14 L14 25z" fill="#8a7058"/><ellipse cx="10" cy="12" rx="5.5" ry="7.5" fill="#d0a890"/><path d="M12 21 L22 19 L25 25 L10 25z" fill="#e8ecf0"/><path d="M0 18 L6 20 L8 25 L0 25z" fill="#2a2a2a"/></g></svg><div class="pname">Марія Чічкань</div><div class="ic" style="left:253px"><svg width="17" height="17" viewBox="0 0 17 17"><path d="M5.3 9.5V4.3a2.45 2.45 0 0 1 4.9 0v3" fill="none" stroke="#c83446" stroke-width="1.1"/><path d="M3.6 8.8a4.4 4.4 0 0 0 4.4 4.2 4.4 4.4 0 0 0 4.3-3.6" fill="none" stroke="#c83446" stroke-width="1.1"/><path d="M8 13v2.2M5.6 15.6h4.8" stroke="#c83446" stroke-width="1.2"/><path d="M0.3 16.6L16.2 1" stroke="#fff" stroke-width="2.4"/><path d="M0.3 16.6L16.2 1" stroke="#c83446" stroke-width="1.1"/></svg></div><div class="ic" style="left:277px"><svg width="17" height="17" viewBox="0 0 17 17"><path d="M1.3 4.3h8.7a1 1 0 0 1 1 1v7.3a1 1 0 0 1-1 1H1.3a1 1 0 0 1-1-1V5.3a1 1 0 0 1 1-1zM11 7.5L15.5 5v8.3L11 10.8" fill="none" stroke="#6e6e78" stroke-width="1.1"/></svg></div></div>
<div class="row" style="top:411px;"><svg class="av" width="25" height="25" viewBox="0 0 25 25" style="border-radius:6px"><rect width="25" height="25" fill="#e6e6e8"/><g filter="url(#avb)"><path d="M2 14 Q1 1 12.5 1 Q24 1 23 14 L20 12 Q18 5 12.5 5 Q7 5 5 12z" fill="#2a1e1e"/><ellipse cx="12.5" cy="13.5" rx="6.5" ry="8" fill="#d4a08e"/><path d="M1 25 Q3 19 9 19 L16 19 Q22 19 24 25z" fill="#1e1a1c"/><path d="M10 14.5 Q12.5 13 15 14.5" stroke="#9a5a56" stroke-width="1" fill="none"/></g></svg><div class="pname">Наталія Марущак</div><div class="ic" style="left:253px"><svg width="17" height="17" viewBox="0 0 17 17"><path d="M5.3 9.5V4.3a2.45 2.45 0 0 1 4.9 0v3" fill="none" stroke="#c83446" stroke-width="1.1"/><path d="M3.6 8.8a4.4 4.4 0 0 0 4.4 4.2 4.4 4.4 0 0 0 4.3-3.6" fill="none" stroke="#c83446" stroke-width="1.1"/><path d="M8 13v2.2M5.6 15.6h4.8" stroke="#c83446" stroke-width="1.2"/><path d="M0.3 16.6L16.2 1" stroke="#fff" stroke-width="2.4"/><path d="M0.3 16.6L16.2 1" stroke="#c83446" stroke-width="1.1"/></svg></div><div class="ic" style="left:277px"><svg width="17" height="17" viewBox="0 0 17 17"><path d="M11 4.3H1.3a1 1 0 0 0-1 1v7.3a1 1 0 0 0 1 1H10a1 1 0 0 0 1-1V5.3zM11 7.5L15.5 5v8.3L11 10.8" fill="none" stroke="#c83446" stroke-width="1.1"/><path d="M0.3 16.6L15.7 1" stroke="#fff" stroke-width="2.4"/><path d="M0.3 16.6L15.7 1" stroke="#c83446" stroke-width="1.1"/></svg></div></div>
<div class="row" style="top:452px;"><div class="av" style="background:#0e5aa7;font-size:16.5px;line-height:25px;font-weight:normal">Н</div><div class="pname">Наталія Чийпеш</div><div class="ic" style="left:253px"><svg width="17" height="17" viewBox="0 0 17 17"><path d="M5.3 9.5V4.3a2.45 2.45 0 0 1 4.9 0v3" fill="none" stroke="#c83446" stroke-width="1.1"/><path d="M3.6 8.8a4.4 4.4 0 0 0 4.4 4.2 4.4 4.4 0 0 0 4.3-3.6" fill="none" stroke="#c83446" stroke-width="1.1"/><path d="M8 13v2.2M5.6 15.6h4.8" stroke="#c83446" stroke-width="1.2"/><path d="M0.3 16.6L16.2 1" stroke="#fff" stroke-width="2.4"/><path d="M0.3 16.6L16.2 1" stroke="#c83446" stroke-width="1.1"/></svg></div><div class="ic" style="left:277px"><svg width="17" height="17" viewBox="0 0 17 17"><path d="M11 4.3H1.3a1 1 0 0 0-1 1v7.3a1 1 0 0 0 1 1H10a1 1 0 0 0 1-1V5.3zM11 7.5L15.5 5v8.3L11 10.8" fill="none" stroke="#c83446" stroke-width="1.1"/><path d="M0.3 16.6L15.7 1" stroke="#fff" stroke-width="2.4"/><path d="M0.3 16.6L15.7 1" stroke="#c83446" stroke-width="1.1"/></svg></div></div>
<div class="row" style="top:493px;"><svg class="av" width="25" height="25" viewBox="0 0 25 25" style="border-radius:6px"><rect width="25" height="25" fill="#3a2c26"/><g filter="url(#avb)"><path d="M0 0 L25 0 L25 25 L0 25z" fill="#4a3a30"/><path d="M0 8 L6 6 L6 25 L0 25z" fill="#1e1e24"/><ellipse cx="14.5" cy="11.5" rx="5.5" ry="7.5" fill="#d8b0a4"/><path d="M5 25 L8 20 Q14 18 20 20 L24 25z" fill="#c8ccd4"/><path d="M13 21 L16 21 L15 25 L14 25z" fill="#1e1e30"/><ellipse cx="20" cy="17" rx="3" ry="4" fill="#b07a80"/></g></svg><div class="pname">Наталія Шакун</div><div class="ic" style="left:253px"><svg width="17" height="17" viewBox="0 0 17 17"><path d="M5.3 9.5V4.3a2.45 2.45 0 0 1 4.9 0v3" fill="none" stroke="#c83446" stroke-width="1.1"/><path d="M3.6 8.8a4.4 4.4 0 0 0 4.4 4.2 4.4 4.4 0 0 0 4.3-3.6" fill="none" stroke="#c83446" stroke-width="1.1"/><path d="M8 13v2.2M5.6 15.6h4.8" stroke="#c83446" stroke-width="1.2"/><path d="M0.3 16.6L16.2 1" stroke="#fff" stroke-width="2.4"/><path d="M0.3 16.6L16.2 1" stroke="#c83446" stroke-width="1.1"/></svg></div><div class="ic" style="left:277px"><svg width="17" height="17" viewBox="0 0 17 17"><path d="M11 4.3H1.3a1 1 0 0 0-1 1v7.3a1 1 0 0 0 1 1H10a1 1 0 0 0 1-1V5.3zM11 7.5L15.5 5v8.3L11 10.8" fill="none" stroke="#c83446" stroke-width="1.1"/><path d="M0.3 16.6L15.7 1" stroke="#fff" stroke-width="2.4"/><path d="M0.3 16.6L15.7 1" stroke="#c83446" stroke-width="1.1"/></svg></div></div>
<div class="row" style="top:534px;background:#ececec;"><div class="av" style="background:#5c4037;font-size:16.5px;line-height:25px;font-weight:normal">О</div><div class="pname">Олександр Колот</div><div class="abs" style="left:274px;top:10px;width:23px;height:23px;border:1px solid #b8b8c0;border-radius:5px;background:#fff"></div><svg class="abs" style="left:280px;top:20px" width="12" height="3" viewBox="0 0 12 3"><circle cx="1.5" cy="1.5" r="1.2" fill="#333"/><circle cx="6" cy="1.5" r="1.2" fill="#333"/><circle cx="10.5" cy="1.5" r="1.2" fill="#333"/></svg></div>
<div class="row" style="top:575px;"><div class="av" style="background:#8f44b8;font-size:15px;line-height:24px;font-weight:bold">о</div><div class="pname">Олена Акименко</div><div class="ic" style="left:253px"><svg width="17" height="17" viewBox="0 0 17 17"><path d="M5.3 9.5V4.3a2.45 2.45 0 0 1 4.9 0v3" fill="none" stroke="#c83446" stroke-width="1.1"/><path d="M3.6 8.8a4.4 4.4 0 0 0 4.4 4.2 4.4 4.4 0 0 0 4.3-3.6" fill="none" stroke="#c83446" stroke-width="1.1"/><path d="M8 13v2.2M5.6 15.6h4.8" stroke="#c83446" stroke-width="1.2"/><path d="M0.3 16.6L16.2 1" stroke="#fff" stroke-width="2.4"/><path d="M0.3 16.6L16.2 1" stroke="#c83446" stroke-width="1.1"/></svg></div><div class="ic" style="left:277px"><svg width="17" height="17" viewBox="0 0 17 17"><path d="M1.3 4.3h8.7a1 1 0 0 1 1 1v7.3a1 1 0 0 1-1 1H1.3a1 1 0 0 1-1-1V5.3a1 1 0 0 1 1-1zM11 7.5L15.5 5v8.3L11 10.8" fill="none" stroke="#6e6e78" stroke-width="1.1"/></svg></div></div>
<div class="row" style="top:616px;"><svg class="av" width="25" height="25" viewBox="0 0 25 25" style="border-radius:6px"><rect width="25" height="25" fill="#7a8690"/><g filter="url(#avb)"><path d="M4 25 Q2 6 8 3 Q13 0 18 3 Q24 7 23 25z" fill="#6a4a2a"/><ellipse cx="13" cy="15" rx="6" ry="8" fill="#e0b8a4"/><path d="M10.5 19.5 Q13 18.5 15.5 19.5 Q13 21 10.5 19.5z" fill="#9a5048"/></g></svg><div class="pname">Олена Гонта</div><div class="ic" style="left:253px"><svg width="17" height="17" viewBox="0 0 17 17"><path d="M5.3 9.5V4.3a2.45 2.45 0 0 1 4.9 0v3" fill="none" stroke="#c83446" stroke-width="1.1"/><path d="M3.6 8.8a4.4 4.4 0 0 0 4.4 4.2 4.4 4.4 0 0 0 4.3-3.6" fill="none" stroke="#c83446" stroke-width="1.1"/><path d="M8 13v2.2M5.6 15.6h4.8" stroke="#c83446" stroke-width="1.2"/><path d="M0.3 16.6L16.2 1" stroke="#fff" stroke-width="2.4"/><path d="M0.3 16.6L16.2 1" stroke="#c83446" stroke-width="1.1"/></svg></div><div class="ic" style="left:277px"><svg width="17" height="17" viewBox="0 0 17 17"><path d="M1.3 4.3h8.7a1 1 0 0 1 1 1v7.3a1 1 0 0 1-1 1H1.3a1 1 0 0 1-1-1V5.3a1 1 0 0 1 1-1zM11 7.5L15.5 5v8.3L11 10.8" fill="none" stroke="#6e6e78" stroke-width="1.1"/></svg></div></div>
<div class="row" style="top:657px;"><div class="av" style="background:#f39c1a;font-size:15px;line-height:24px;font-weight:bold">о</div><div class="pname">Олена Парубець</div><div class="ic" style="left:253px"><svg width="17" height="17" viewBox="0 0 17 17"><path d="M5.3 9.5V4.3a2.45 2.45 0 0 1 4.9 0v3" fill="none" stroke="#c83446" stroke-width="1.1"/><path d="M3.6 8.8a4.4 4.4 0 0 0 4.4 4.2 4.4 4.4 0 0 0 4.3-3.6" fill="none" stroke="#c83446" stroke-width="1.1"/><path d="M8 13v2.2M5.6 15.6h4.8" stroke="#c83446" stroke-width="1.2"/><path d="M0.3 16.6L16.2 1" stroke="#fff" stroke-width="2.4"/><path d="M0.3 16.6L16.2 1" stroke="#c83446" stroke-width="1.1"/></svg></div><div class="ic" style="left:277px"><svg width="17" height="17" viewBox="0 0 17 17"><path d="M11 4.3H1.3a1 1 0 0 0-1 1v7.3a1 1 0 0 0 1 1H10a1 1 0 0 0 1-1V5.3zM11 7.5L15.5 5v8.3L11 10.8" fill="none" stroke="#c83446" stroke-width="1.1"/><path d="M0.3 16.6L15.7 1" stroke="#fff" stroke-width="2.4"/><path d="M0.3 16.6L15.7 1" stroke="#c83446" stroke-width="1.1"/></svg></div></div>
<div class="row" style="top:698px;"><div class="av" style="background:#8546b5;font-size:16.5px;line-height:25px;font-weight:normal">О</div><div class="pname">Олена Хребтань Хребтань Ол...</div><div class="ic" style="left:253px"><svg width="17" height="17" viewBox="0 0 17 17"><path d="M5.3 9.5V4.3a2.45 2.45 0 0 1 4.9 0v3" fill="none" stroke="#c83446" stroke-width="1.1"/><path d="M3.6 8.8a4.4 4.4 0 0 0 4.4 4.2 4.4 4.4 0 0 0 4.3-3.6" fill="none" stroke="#c83446" stroke-width="1.1"/><path d="M8 13v2.2M5.6 15.6h4.8" stroke="#c83446" stroke-width="1.2"/><path d="M0.3 16.6L16.2 1" stroke="#fff" stroke-width="2.4"/><path d="M0.3 16.6L16.2 1" stroke="#c83446" stroke-width="1.1"/></svg></div><div class="ic" style="left:277px"><svg width="17" height="17" viewBox="0 0 17 17"><path d="M11 4.3H1.3a1 1 0 0 0-1 1v7.3a1 1 0 0 0 1 1H10a1 1 0 0 0 1-1V5.3zM11 7.5L15.5 5v8.3L11 10.8" fill="none" stroke="#c83446" stroke-width="1.1"/><path d="M0.3 16.6L15.7 1" stroke="#fff" stroke-width="2.4"/><path d="M0.3 16.6L15.7 1" stroke="#c83446" stroke-width="1.1"/></svg></div></div>
<div class="row" style="top:739px;"><svg class="av" width="25" height="25" viewBox="0 0 25 25" style="border-radius:6px"><rect width="25" height="25" fill="#3a4668"/><g filter="url(#avb)"><path d="M0 0 L25 0 L25 8 Q15 12 0 10z" fill="#8a8a6a"/><path d="M0 15 Q6 13 10 18 L8 25 L0 25z" fill="#5a5a50"/><ellipse cx="6" cy="18" rx="4" ry="2" fill="#b0a890"/><path d="M12 20 L18 17 L20 25 L12 25z" fill="#5a8080"/><path d="M18 8 L25 10 L25 16 L20 16z" fill="#b8c0c8"/><circle cx="12" cy="6" r="2" fill="#c8c8a8"/></g></svg><div class="pname">Світлана Киселиця</div><div class="ic" style="left:253px"><svg width="17" height="17" viewBox="0 0 17 17"><path d="M5.3 9.5V4.3a2.45 2.45 0 0 1 4.9 0v3" fill="none" stroke="#c83446" stroke-width="1.1"/><path d="M3.6 8.8a4.4 4.4 0 0 0 4.4 4.2 4.4 4.4 0 0 0 4.3-3.6" fill="none" stroke="#c83446" stroke-width="1.1"/><path d="M8 13v2.2M5.6 15.6h4.8" stroke="#c83446" stroke-width="1.2"/><path d="M0.3 16.6L16.2 1" stroke="#fff" stroke-width="2.4"/><path d="M0.3 16.6L16.2 1" stroke="#c83446" stroke-width="1.1"/></svg></div><div class="ic" style="left:277px"><svg width="17" height="17" viewBox="0 0 17 17"><path d="M11 4.3H1.3a1 1 0 0 0-1 1v7.3a1 1 0 0 0 1 1H10a1 1 0 0 0 1-1V5.3zM11 7.5L15.5 5v8.3L11 10.8" fill="none" stroke="#c83446" stroke-width="1.1"/><path d="M0.3 16.6L15.7 1" stroke="#fff" stroke-width="2.4"/><path d="M0.3 16.6L15.7 1" stroke="#c83446" stroke-width="1.1"/></svg></div></div>
<div class="row" style="top:780px;"><div class="av" style="background:#f39c1a;font-size:15px;line-height:24px;font-weight:bold">с</div><div class="pname">Сергей Пономаренко</div><div class="ic" style="left:253px"><svg width="17" height="17" viewBox="0 0 17 17"><path d="M5.3 9.5V4.3a2.45 2.45 0 0 1 4.9 0v3" fill="none" stroke="#c83446" stroke-width="1.1"/><path d="M3.6 8.8a4.4 4.4 0 0 0 4.4 4.2 4.4 4.4 0 0 0 4.3-3.6" fill="none" stroke="#c83446" stroke-width="1.1"/><path d="M8 13v2.2M5.6 15.6h4.8" stroke="#c83446" stroke-width="1.2"/><path d="M0.3 16.6L16.2 1" stroke="#fff" stroke-width="2.4"/><path d="M0.3 16.6L16.2 1" stroke="#c83446" stroke-width="1.1"/></svg></div><div class="ic" style="left:277px"><svg width="17" height="17" viewBox="0 0 17 17"><path d="M11 4.3H1.3a1 1 0 0 0-1 1v7.3a1 1 0 0 0 1 1H10a1 1 0 0 0 1-1V5.3zM11 7.5L15.5 5v8.3L11 10.8" fill="none" stroke="#c83446" stroke-width="1.1"/><path d="M0.3 16.6L15.7 1" stroke="#fff" stroke-width="2.4"/><path d="M0.3 16.6L15.7 1" stroke="#c83446" stroke-width="1.1"/></svg></div></div>
<div class="row" style="top:821px;"><div class="av" style="background:#8f44b0;font-size:15px;line-height:24px;font-weight:bold">с</div><div class="pname">Сергій Сапон</div><div class="ic" style="left:253px"><svg width="17" height="17" viewBox="0 0 17 17"><path d="M5.3 9.5V4.3a2.45 2.45 0 0 1 4.9 0v3" fill="none" stroke="#c83446" stroke-width="1.1"/><path d="M3.6 8.8a4.4 4.4 0 0 0 4.4 4.2 4.4 4.4 0 0 0 4.3-3.6" fill="none" stroke="#c83446" stroke-width="1.1"/><path d="M8 13v2.2M5.6 15.6h4.8" stroke="#c83446" stroke-width="1.2"/><path d="M0.3 16.6L16.2 1" stroke="#fff" stroke-width="2.4"/><path d="M0.3 16.6L16.2 1" stroke="#c83446" stroke-width="1.1"/></svg></div><div class="ic" style="left:277px"><svg width="17" height="17" viewBox="0 0 17 17"><path d="M1.3 4.3h8.7a1 1 0 0 1 1 1v7.3a1 1 0 0 1-1 1H1.3a1 1 0 0 1-1-1V5.3a1 1 0 0 1 1-1zM11 7.5L15.5 5v8.3L11 10.8" fill="none" stroke="#6e6e78" stroke-width="1.1"/></svg></div></div>
<div class="row" style="top:862px;"><svg class="av" width="25" height="25" viewBox="0 0 25 25" style="border-radius:6px"><rect width="25" height="25" fill="#1a1a10"/><g filter="url(#avb)"><path d="M0 0 L16 0 L14 14 L0 16z" fill="#2a3018"/><path d="M0 16 Q8 14 15 22 L15 25 L0 25z" fill="#d83848"/><path d="M15 25 L16 14 Q18 7 22 8 L25 9 L25 25z" fill="#6a5a48"/><ellipse cx="20.5" cy="15" rx="4.5" ry="5.5" fill="#d0a8a0"/><path d="M16 21 L25 20 L25 25 L17 25z" fill="#6a7a50"/></g></svg><div class="pname">Tetiana Denysenko</div><div class="ic" style="left:253px"><svg width="17" height="17" viewBox="0 0 17 17"><path d="M5.3 9.5V4.3a2.45 2.45 0 0 1 4.9 0v3" fill="none" stroke="#c83446" stroke-width="1.1"/><path d="M3.6 8.8a4.4 4.4 0 0 0 4.4 4.2 4.4 4.4 0 0 0 4.3-3.6" fill="none" stroke="#c83446" stroke-width="1.1"/><path d="M8 13v2.2M5.6 15.6h4.8" stroke="#c83446" stroke-width="1.2"/><path d="M0.3 16.6L16.2 1" stroke="#fff" stroke-width="2.4"/><path d="M0.3 16.6L16.2 1" stroke="#c83446" stroke-width="1.1"/></svg></div><div class="ic" style="left:277px"><svg width="17" height="17" viewBox="0 0 17 17"><path d="M1.3 4.3h8.7a1 1 0 0 1 1 1v7.3a1 1 0 0 1-1 1H1.3a1 1 0 0 1-1-1V5.3a1 1 0 0 1 1-1zM11 7.5L15.5 5v8.3L11 10.8" fill="none" stroke="#6e6e78" stroke-width="1.1"/></svg></div></div>
<div class="row" style="top:903px;"><div class="av" style="background:#2aae66;font-size:14px;line-height:25px;font-weight:bold">Ю</div><div class="pname">Юрій Дудко</div><div class="ic" style="left:253px"><svg width="17" height="17" viewBox="0 0 17 17"><path d="M5.3 9.5V4.3a2.45 2.45 0 0 1 4.9 0v3" fill="none" stroke="#c83446" stroke-width="1.1"/><path d="M3.6 8.8a4.4 4.4 0 0 0 4.4 4.2 4.4 4.4 0 0 0 4.3-3.6" fill="none" stroke="#c83446" stroke-width="1.1"/><path d="M8 13v2.2M5.6 15.6h4.8" stroke="#c83446" stroke-width="1.2"/><path d="M0.3 16.6L16.2 1" stroke="#fff" stroke-width="2.4"/><path d="M0.3 16.6L16.2 1" stroke="#c83446" stroke-width="1.1"/></svg></div><div class="ic" style="left:277px"><svg width="17" height="17" viewBox="0 0 17 17"><path d="M11 4.3H1.3a1 1 0 0 0-1 1v7.3a1 1 0 0 0 1 1H10a1 1 0 0 0 1-1V5.3zM11 7.5L15.5 5v8.3L11 10.8" fill="none" stroke="#c83446" stroke-width="1.1"/><path d="M0.3 16.6L15.7 1" stroke="#fff" stroke-width="2.4"/><path d="M0.3 16.6L15.7 1" stroke="#c83446" stroke-width="1.1"/></svg></div></div>
<div class="row" style="top:944px;"><div class="av" style="background:#16a085;font-size:14px;line-height:25px;font-weight:bold">С</div><div class="pname">Сергей Беляков</div><div class="ic" style="left:277px"><svg width="17" height="17" viewBox="0 0 17 17"><path d="M11 4.3H1.3a1 1 0 0 0-1 1v7.3a1 1 0 0 0 1 1H10a1 1 0 0 0 1-1V5.3zM11 7.5L15.5 5v8.3L11 10.8" fill="none" stroke="#c83446" stroke-width="1.1"/><path d="M0.3 16.6L15.7 1" stroke="#fff" stroke-width="2.4"/><path d="M0.3 16.6L15.7 1" stroke="#c83446" stroke-width="1.1"/></svg></div></div>
<div class="abs" style="left:1623px;top:98px;width:25px;height:18px;border-radius:6px;background:#2b7fc0"></div>
<div class="abs" style="left:1603px;top:60px;width:305px;height:52px;background:#fff"></div>
<div class="abs" style="left:1619px;top:77px;width:285px;height:32px;border:1px solid #c4c4cc;border-radius:8px;background:#fff"></div>
<svg class="abs" style="left:1630px;top:86px" width="14" height="14" viewBox="0 0 14 14"><circle cx="6" cy="6" r="4.8" fill="none" stroke="#777" stroke-width="1.2"/><path d="M9.5 9.5L13 13" stroke="#777" stroke-width="1.3"/></svg>
<div class="abs" style="left:1647px;top:84px;font-size:13px;line-height:17px;color:#74747c">Найти участника</div>
<div class="abs" style="left:1910px;top:112px;width:8px;height:874px;border-radius:4px;background:#f0eff5"></div>
<div class="abs" style="left:1910px;top:615px;width:8px;height:371px;border-radius:4px;background:#aeaeb4"></div>
<div class="abs" style="left:1715px;top:1003px;width:91px;height:23px;border:1px solid #9a9aa0;border-radius:6px;background:#fff;color:#232333;font-size:13px;line-height:21px;text-align:center">Пригласить</div>
<div id="taskbar" class="abs"></div>
<div class="abs" style="left:344px;top:1040px;width:45px;height:40px;background:#4b5a61"></div>
<div class="abs" style="left:103px;top:1078px;width:40px;height:2px;background:#76b9ed"></div>
<div class="abs" style="left:152px;top:1078px;width:40px;height:2px;background:#76b9ed"></div>
<div class="abs" style="left:201px;top:1078px;width:40px;height:2px;background:#76b9ed"></div>
<div class="abs" style="left:250px;top:1078px;width:40px;height:2px;background:#76b9ed"></div>
<div class="abs" style="left:344px;top:1078px;width:45px;height:2px;background:#76b9ed"></div>
<div class="abs" style="left:397px;top:1078px;width:40px;height:2px;background:#76b9ed"></div>
<svg class="abs" style="left:15px;top:1051px" width="18" height="18" viewBox="0 0 18 18"><path d="M0 2.5L7.3 1.5V8.5H0zM8.3 1.3L18 0V8.5H8.3zM0 9.5H7.3V16.5L0 15.5zM8.3 9.5H18V18L8.3 16.7z" fill="#fff"/></svg>
<svg class="abs" style="left:63px;top:1050px" width="18" height="18" viewBox="0 0 18 18"><circle cx="11" cy="7" r="5.5" fill="none" stroke="#fff" stroke-width="1.4"/><path d="M7 11L1.5 16.5" stroke="#fff" stroke-width="1.6"/></svg>
<div class="abs" style="left:112px;top:1048px;width:22px;height:22px;border-radius:3px;background:#c4161c"></div>
<svg class="abs" style="left:114px;top:1050px" width="18" height="18" viewBox="0 0 18 18"><path d="M3 15c2-3 4-8 5-12 1 3 3 7 7 9-4-1-9 0-12 3z" fill="none" stroke="#fff" stroke-width="1.4"/></svg>
<svg class="abs" style="left:161px;top:1049px" width="23" height="20" viewBox="0 0 23 20"><path d="M0 2h8l2 2h13v15H0z" fill="#e8b84a"/><rect x="0" y="6" width="23" height="13" fill="#f7d36a"/><rect x="8" y="13" width="7" height="4" fill="#3d8fd6"/></svg>
<svg class="abs" style="left:209px;top:1047px" width="26" height="26" viewBox="0 0 26 26"><circle cx="11.5" cy="11.5" r="11" fill="#db4437"/><path d="M11.5 11.5L22.5 11.5A11 11 0 0 1 6 21z" fill="#f4c20d"/><path d="M11.5 11.5L6 21A11 11 0 0 1 1.6 6z" fill="#0f9d58"/><circle cx="11.5" cy="11.5" r="4.5" fill="#fff"/><circle cx="11.5" cy="11.5" r="3.5" fill="#4285f4"/><circle cx="19" cy="19" r="6" fill="#1e7e34"/><text x="19" y="22.5" font-size="9" fill="#fff" text-anchor="middle" font-family="Liberation Sans">A</text></svg>
<svg class="abs" style="left:257px;top:1047px" width="30" height="28" viewBox="0 0 30 28"><circle cx="12" cy="12" r="11.5" fill="#2aa3de"/><path d="M5 11.5l13-5-2.5 11.5-4-3-2 2-.5-3.5 6-5.5-7.5 4.5z" fill="#fff"/><rect x="14" y="15" width="15" height="10" rx="2" fill="#e03c31"/><text x="21.5" y="23.5" font-size="8" fill="#fff" text-anchor="middle" font-family="Liberation Sans">784</text></svg>
<svg class="abs" style="left:307px;top:1047px" width="24" height="26" viewBox="0 0 24 26"><path d="M12 1c6 0 11 1.5 11 9.5S19 20 12 20l-3 4v-4.3C3 18.5 1 15 1 10.5 1 2.5 6 1 12 1z" fill="#7b62d9" stroke="#fff" stroke-width="1.4"/><path d="M8 6c-1 1-1 2 0 4s3 4 5 5 3 1 4 0l-1.5-2-2 .5-3-3 .5-2z" fill="#fff"/></svg>
<div class="abs" style="left:355px;top:1048px;width:25px;height:25px;border-radius:50%;background:#0b5cff;color:#fff;font-size:7px;line-height:25px;text-align:center;font-weight:bold">zoom</div>
<svg class="abs" style="left:404px;top:1048px" width="26" height="24" viewBox="0 0 26 24"><rect x="7" y="1" width="18" height="21" fill="#2b7cd3"/><rect x="7" y="1" width="18" height="5" fill="#41a5ee"/><rect x="7" y="11" width="18" height="5" fill="#185abd"/><rect x="7" y="16" width="18" height="6" fill="#103f91"/><rect x="0" y="5" width="14" height="14" fill="#185abd"/><text x="7" y="16.5" font-size="11" font-weight="bold" fill="#fff" text-anchor="middle" font-family="Liberation Sans">W</text></svg>
<svg class="abs" style="left:1660px;top:1050px" width="18" height="18" viewBox="0 0 18 18"><circle cx="6" cy="8" r="3" fill="none" stroke="#fff" stroke-width="1.2"/><circle cx="12.5" cy="4" r="2.5" fill="none" stroke="#fff" stroke-width="1.2"/><path d="M1 17a5 5 0 0 1 10 0M9 10a4.5 4.5 0 0 1 8 3" fill="none" stroke="#fff" stroke-width="1.2"/></svg>
<svg class="abs" style="left:1697px;top:1054px" width="14" height="8" viewBox="0 0 14 8"><path d="M1 7l6-6 6 6" fill="none" stroke="#fff" stroke-width="1.3"/></svg>
<svg class="abs" style="left:1721px;top:1052px" width="17" height="15" viewBox="0 0 17 15"><path d="M3 1h13v9H3zM9.5 10v3M6 13.5h7M0.5 3h4v5h-4" fill="none" stroke="#fff" stroke-width="1.1"/></svg>
<svg class="abs" style="left:1745px;top:1051px" width="18" height="17" viewBox="0 0 18 17"><path d="M1 6h3l4-4v12l-4-4H1z" fill="none" stroke="#fff" stroke-width="1.1"/><circle cx="12.5" cy="11.5" r="4.5" fill="#e81123"/><path d="M10.5 9.5l4 4M14.5 9.5l-4 4" stroke="#fff" stroke-width="1.1"/></svg>
<div class="abs" style="left:1771px;top:1052px;color:#fff;font-size:12px;line-height:15px">ENG</div>
<div class="abs" style="left:1800px;top:1043px;width:68px;text-align:center;color:#fff;font-size:11.4px;line-height:17px">11:36<br>30.05.2023</div>
<svg class="abs" style="left:1878px;top:1050px" width="19" height="18" viewBox="0 0 19 18"><path d="M1 1h17v12H9l-4 4v-4H1z" fill="none" stroke="#fff" stroke-width="1.2"/></svg>
<div class="abs" style="left:1915px;top:1040px;width:1px;height:40px;background:#4a5568"></div></body></html>
